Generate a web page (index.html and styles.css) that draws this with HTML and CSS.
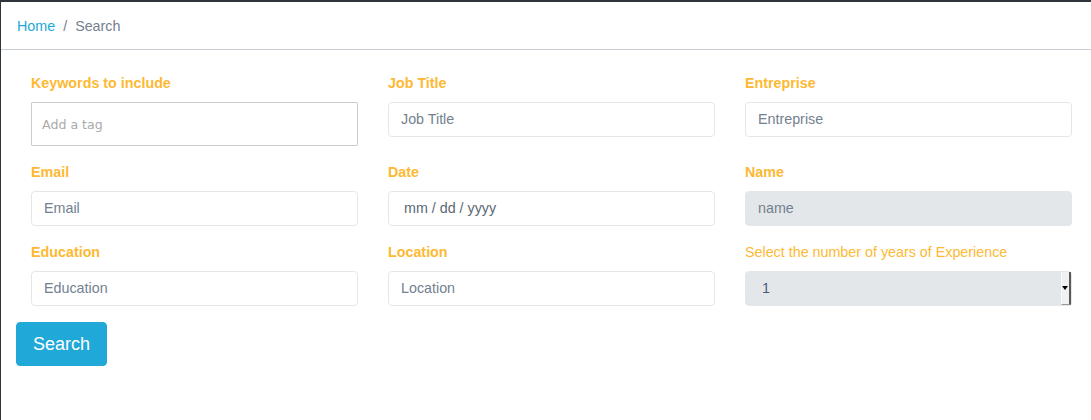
FILE: index.html
```html
<!DOCTYPE html>
<html lang="en">
<head>
<meta charset="utf-8">
<title>Search</title>
<link rel="stylesheet" href="styles.css">
</head>
<body>
<div class="app">
  <ol class="breadcrumb">
    <li class="crumb"><a href="#" class="crumb-link">Home</a></li>
    <li class="crumb crumb-sep">/</li>
    <li class="crumb crumb-active">Search</li>
  </ol>
  <form class="content">
    <div class="form-grid">
      <div class="field">
        <label class="label">Keywords to include</label>
        <div class="tag-input"><span class="tag-placeholder">Add a tag</span></div>
      </div>
      <div class="field">
        <label class="label">Job Title</label>
        <input class="control" type="text" placeholder="Job Title">
      </div>
      <div class="field">
        <label class="label">Entreprise</label>
        <input class="control" type="text" placeholder="Entreprise">
      </div>
      <div class="field">
        <label class="label">Email</label>
        <input class="control" type="text" placeholder="Email">
      </div>
      <div class="field">
        <label class="label">Date</label>
        <input class="control control-date" type="text" placeholder="mm / dd / yyyy">
      </div>
      <div class="field">
        <label class="label">Name</label>
        <input class="control control-disabled" type="text" placeholder="name" disabled>
      </div>
      <div class="field">
        <label class="label">Education</label>
        <input class="control" type="text" placeholder="Education">
      </div>
      <div class="field">
        <label class="label">Location</label>
        <input class="control" type="text" placeholder="Location">
      </div>
      <div class="field">
        <label class="label label-normal">Select the number of years of Experience</label>
        <div class="select-wrap">
          <select class="control control-select">
            <option>1</option>
          </select>
          <span class="select-arrow"><span class="select-tri"></span></span>
        </div>
      </div>
    </div>
    <button type="button" class="btn">Search</button>
  </form>
</div>
</body>
</html>
```

FILE: styles.css
```css
html, body {
  margin: 0;
  padding: 0;
  background: #ffffff;
}

body {
  font-family: "Liberation Sans", Arial, sans-serif;
  font-size: 14.3px;
  line-height: 21px;
  color: #23282c;
}

.app {
  min-height: 100vh;
  box-sizing: border-box;
  border-top: 2px solid #2f353a;
  border-left: 1px solid #2f353a;
}

.breadcrumb {
  display: flex;
  list-style: none;
  margin: 0;
  padding: 14px 16px 12px;
  border-bottom: 1px solid #c8ced3;
}

.crumb {
  color: #73818f;
}

.crumb-link {
  color: #20a8d8;
  text-decoration: none;
}

.crumb-sep {
  padding: 0 8px;
  color: #73818f;
}

.content {
  padding: 23px 15px 0;
  margin: 0;
}

.form-grid {
  display: grid;
  grid-template-columns: repeat(3, 327px);
  column-gap: 30px;
  row-gap: 16px;
  padding-left: 15px;
}

.field {
  display: flex;
  flex-direction: column;
}

.label {
  display: block;
  color: #fdb933;
  font-weight: bold;
  margin-bottom: 8px;
}

.label-normal {
  font-weight: normal;
}

.control {
  box-sizing: border-box;
  width: 100%;
  height: 35px;
  padding: 6px 12px 7px;
  font-family: "Liberation Sans", Arial, sans-serif;
  font-size: 14.3px;
  line-height: 21px;
  color: #5c6873;
  background: #ffffff;
  border: 1px solid #e4e7ea;
  border-radius: 4px;
  outline: none;
  margin: 0;
}

.control::placeholder {
  color: #73818f;
  opacity: 1;
}

.control-date {
  padding-left: 15px;
}

.control-date::placeholder {
  color: #5c6873;
}

.control-disabled {
  background: #e4e7ea;
  border-color: #e4e7ea;
}

.tag-input {
  box-sizing: border-box;
  height: 44px;
  border: 1px solid #cccccc;
  border-radius: 1px;
  padding: 0 10px;
  display: flex;
  align-items: center;
}

.tag-placeholder {
  font-family: "DejaVu Sans", Verdana, sans-serif;
  font-size: 12.6px;
  color: #aaaaaa;
  padding-top: 1px;
}

.select-wrap {
  position: relative;
}

.control-select {
  appearance: none;
  -webkit-appearance: none;
  background: #e4e7ea;
  border-color: #e4e7ea;
  padding-left: 16px;
  color: #4a5a7a;
}

.select-arrow {
  position: absolute;
  top: 1px;
  right: 1px;
  width: 10px;
  height: 33px;
  box-sizing: border-box;
  background: #f1f1f1;
  border-right: 2px solid #5a5a5a;
  border-bottom: 1px solid #9a9a9a;
  border-left: 1px solid #fafafa;
  display: flex;
  align-items: center;
  justify-content: center;
}

.select-tri {
  width: 0;
  height: 0;
  border-left: 3px solid transparent;
  border-right: 3px solid transparent;
  border-top: 4px solid #000000;
  margin-left: -1px;
}

.btn {
  display: inline-block;
  margin-top: 16px;
  box-sizing: border-box;
  height: 44px;
  padding: 8px 16px;
  font-family: "Liberation Sans", Arial, sans-serif;
  font-size: 18px;
  line-height: 26px;
  color: #ffffff;
  background: #20a8d8;
  border: 1px solid #20a8d8;
  border-radius: 4px;
  cursor: pointer;
}
```
